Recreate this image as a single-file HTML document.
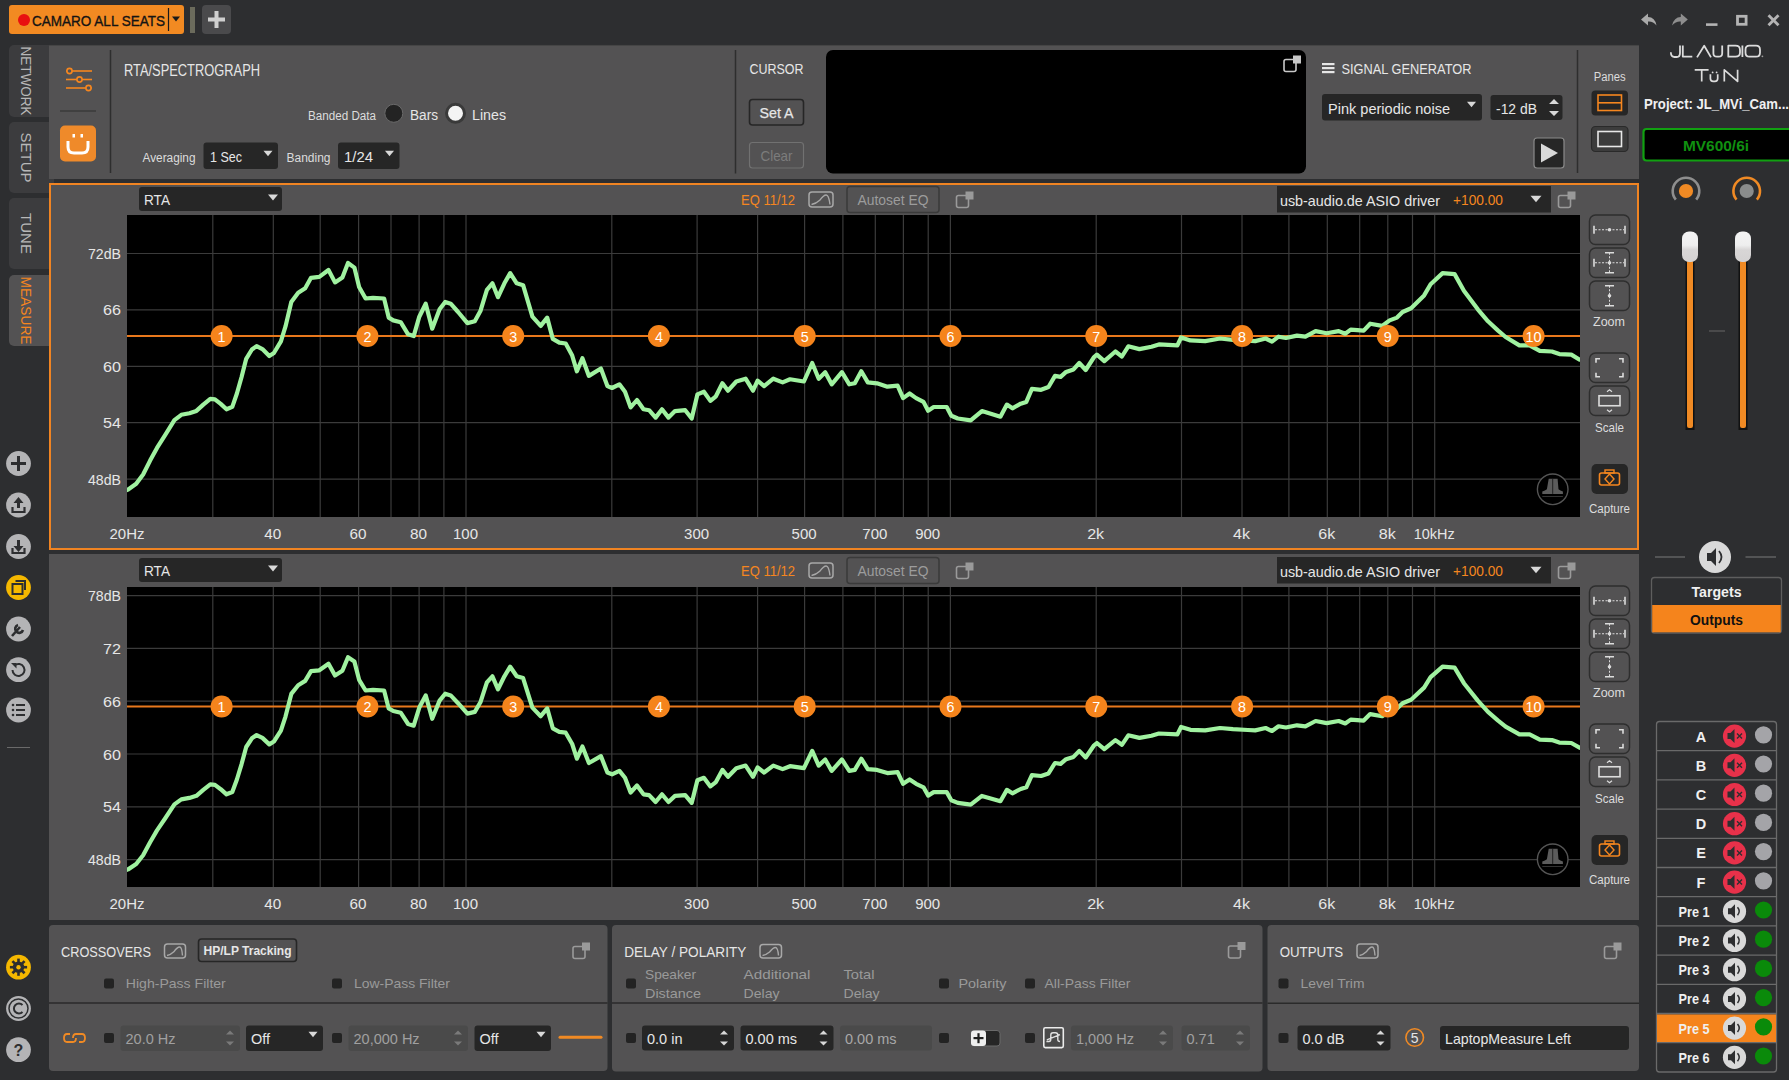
<!DOCTYPE html>
<html><head><meta charset="utf-8"><title>JL Audio TüN - RTA</title>
<style>html,body{margin:0;padding:0;background:#2d2e30;overflow:hidden}svg{display:block}text{font-family:"Liberation Sans", sans-serif}</style>
</head><body>
<svg width="1789" height="1080" viewBox="0 0 1789 1080">
<rect x="0" y="0" width="1789" height="1080" fill="#2d2e30" />
<rect x="9" y="5" width="175" height="29" fill="#f28a22" rx="3" />
<circle cx="24" cy="20" r="6" fill="#e81010"/>
<text x="32" y="25.5" font-size="15.5" fill="#141414" text-anchor="start" font-weight="normal" textLength="133" lengthAdjust="spacingAndGlyphs" stroke="#141414" stroke-width="0.35">CAMARO ALL SEATS</text>
<line x1="168.5" y1="8" x2="168.5" y2="31" stroke="#1a1a1a" stroke-width="1.2" />
<path d="M172.0 16.5 L180.0 16.5 L176 21.5 Z" fill="#1a1a1a"/>
<rect x="190" y="7" width="5" height="26" fill="#6b6b5c" />
<rect x="202" y="5" width="29" height="29" fill="#4a4a4c" rx="4" />
<rect x="208" y="17.5" width="17" height="4" fill="#cfcfcf" />
<rect x="214.5" y="11" width="4" height="17" fill="#cfcfcf" />
<path d="M1641 19.5 L1648 13.5 L1648 17 Q1655 17 1656.5 25.5 Q1653 21 1648 21.5 L1648 25.5 Z" fill="#a9a9a9"/>
<path d="M1687.8 19.5 L1680.8 13.5 L1680.8 17 Q1674 17 1672 25.5 Q1676 21 1680.8 21.5 L1680.8 25.5 Z" fill="#8e8e8e"/>
<rect x="1706" y="23.3" width="11.5" height="2.6" fill="#b4b4b4" />
<rect x="1737.5" y="16.3" width="8.6" height="8" fill="none" stroke="#b4b4b4" stroke-width="2.8" />
<line x1="1768.5" y1="15.2" x2="1778.5" y2="25.2" stroke="#b4b4b4" stroke-width="2.9" />
<line x1="1778.5" y1="15.2" x2="1768.5" y2="25.2" stroke="#b4b4b4" stroke-width="2.9" />
<rect x="9" y="45" width="45" height="72" fill="#3c3c3e" rx="5" />
<text x="0" y="0" font-size="15" fill="#b8b8b8" text-anchor="middle" font-weight="normal" textLength="69" lengthAdjust="spacingAndGlyphs" transform="translate(20.5 81.0) rotate(90)">NETWORK</text>
<rect x="9" y="122" width="45" height="71" fill="#3c3c3e" rx="5" />
<text x="0" y="0" font-size="15" fill="#b8b8b8" text-anchor="middle" font-weight="normal" transform="translate(20.5 157.5) rotate(90)">SETUP</text>
<rect x="9" y="198" width="45" height="71" fill="#3c3c3e" rx="5" />
<text x="0" y="0" font-size="15" fill="#b8b8b8" text-anchor="middle" font-weight="normal" transform="translate(20.5 233.5) rotate(90)">TUNE</text>
<rect x="9" y="275" width="45" height="71" fill="#535253" rx="5" />
<text x="0" y="0" font-size="15" fill="#f5861f" text-anchor="middle" font-weight="normal" textLength="68" lengthAdjust="spacingAndGlyphs" transform="translate(20.5 310.5) rotate(90)">MEASURE</text>
<circle cx="18.5" cy="463.5" r="12.4" fill="#b4b4b6"/>
<rect x="11" y="462" width="15" height="3" fill="#2d2e30" />
<rect x="17" y="456" width="3" height="15" fill="#2d2e30" />
<circle cx="18.5" cy="505" r="12.4" fill="#b4b4b6"/>
<path d="M18.5 497 L13.5 503 L17 503 L17 508 L20 508 L20 503 L23.5 503 Z" fill="#2d2e30"/>
<path d="M12.5 507 L12.5 512 L24.5 512 L24.5 507" fill="none" stroke="#2d2e30" stroke-width="2.2"/>
<circle cx="18.5" cy="546.5" r="12.4" fill="#b4b4b6"/>
<path d="M18.5 552 L13.5 546 L17 546 L17 540 L20 540 L20 546 L23.5 546 Z" fill="#2d2e30"/>
<path d="M12.5 548 L12.5 553 L24.5 553 L24.5 548" fill="none" stroke="#2d2e30" stroke-width="2.2"/>
<circle cx="18.5" cy="587.5" r="12.4" fill="#f5b800"/>
<rect x="12.5" y="584" width="10" height="10" fill="none" stroke="#2d2e30" stroke-width="2" />
<path d="M15.5 581 L25 581 L25 590" fill="none" stroke="#2d2e30" stroke-width="2"/>
<circle cx="18.5" cy="629" r="12.4" fill="#b4b4b6"/>
<path d="M12 636 L20 627 M18 625 A4 4 0 1 0 23 630" fill="none" stroke="#2d2e30" stroke-width="2.6"/>
<circle cx="18.5" cy="669.7" r="12.4" fill="#b4b4b6"/>
<path d="M12.5 670 A6 6 0 1 0 14.5 665.5" fill="none" stroke="#2d2e30" stroke-width="2"/>
<path d="M11 663 L16.5 663 L16.5 668.5 Z" fill="#2d2e30"/>
<circle cx="18.5" cy="710" r="12.4" fill="#b4b4b6"/>
<circle cx="13" cy="705" r="1.3" fill="#2d2e30"/>
<rect x="16" y="704" width="9" height="2" fill="#2d2e30" />
<circle cx="13" cy="710" r="1.3" fill="#2d2e30"/>
<rect x="16" y="709" width="9" height="2" fill="#2d2e30" />
<circle cx="13" cy="715" r="1.3" fill="#2d2e30"/>
<rect x="16" y="714" width="9" height="2" fill="#2d2e30" />
<line x1="7" y1="747.5" x2="30" y2="747.5" stroke="#6a6a6a" stroke-width="1" />
<circle cx="18.5" cy="967.2" r="12.4" fill="#f5b800"/>
<circle cx="18.5" cy="967.2" r="5.8" fill="#2d2e30"/>
<line x1="23.5" y1="967.2" x2="27.1" y2="967.2" stroke="#2d2e30" stroke-width="2.6" />
<line x1="22.035533905932738" y1="970.7355339059328" x2="24.58111831820431" y2="973.2811183182043" stroke="#2d2e30" stroke-width="2.6" />
<line x1="18.5" y1="972.2" x2="18.5" y2="975.8000000000001" stroke="#2d2e30" stroke-width="2.6" />
<line x1="14.964466094067262" y1="970.7355339059328" x2="12.418881681795693" y2="973.2811183182043" stroke="#2d2e30" stroke-width="2.6" />
<line x1="13.5" y1="967.2" x2="9.9" y2="967.2" stroke="#2d2e30" stroke-width="2.6" />
<line x1="14.964466094067262" y1="963.6644660940673" x2="12.418881681795689" y2="961.1188816817958" stroke="#2d2e30" stroke-width="2.6" />
<line x1="18.5" y1="962.2" x2="18.5" y2="958.6" stroke="#2d2e30" stroke-width="2.6" />
<line x1="22.035533905932738" y1="963.6644660940673" x2="24.581118318204307" y2="961.1188816817958" stroke="#2d2e30" stroke-width="2.6" />
<circle cx="18.5" cy="967.2" r="2.2" fill="#f5b800"/>
<circle cx="18.5" cy="1008.5" r="12.4" fill="#b4b4b6"/>
<circle cx="18.5" cy="1008.5" r="9.5" fill="none" stroke="#2d2e30" stroke-width="1.5"/>
<path d="M22.5 1005 A5 5 0 1 0 22.5 1012" fill="none" stroke="#2d2e30" stroke-width="2"/>
<circle cx="18.5" cy="1049.7" r="12.4" fill="#b4b4b6"/>
<text x="18.5" y="1055.5" font-size="16" fill="#2d2e30" text-anchor="middle" font-weight="bold" >?</text>
<rect x="49" y="45" width="1590" height="134" fill="#535253" />
<line x1="49" y1="45.3" x2="1639" y2="45.3" stroke="#3e3d3e" stroke-width="0.8" />
<line x1="66" y1="71" x2="92" y2="71" stroke="#f5861f" stroke-width="1.6" />
<circle cx="69.5" cy="71" r="2.6" fill="#535253" stroke="#f5861f" stroke-width="1.6"/>
<line x1="66" y1="79.5" x2="92" y2="79.5" stroke="#f5861f" stroke-width="1.6" />
<circle cx="79.5" cy="79.5" r="2.6" fill="#535253" stroke="#f5861f" stroke-width="1.6"/>
<line x1="66" y1="88" x2="92" y2="88" stroke="#f5861f" stroke-width="1.6" />
<circle cx="88.5" cy="88" r="2.6" fill="#535253" stroke="#f5861f" stroke-width="1.6"/>
<line x1="60" y1="111" x2="96" y2="111" stroke="#2e2e2e" stroke-width="1.2" />
<rect x="60" y="125.5" width="36" height="36" fill="#ef8a2a" rx="5" />
<path d="M68 141 L68 147 Q68 153 74 153 L82 153 Q88 153 88 147 L88 141" fill="none" stroke="#fff" stroke-width="3"/>
<rect x="72.5" y="134" width="2.5" height="3.5" fill="#fff" />
<rect x="80.5" y="134" width="2.5" height="3.5" fill="#fff" />
<line x1="110.5" y1="50" x2="110.5" y2="173" stroke="#2e2e2e" stroke-width="1.5" />
<text x="124" y="76" font-size="16" fill="#e6e6e6" text-anchor="start" font-weight="normal" textLength="136" lengthAdjust="spacingAndGlyphs" >RTA/SPECTROGRAPH</text>
<text x="308" y="119.5" font-size="12.5" fill="#dcdcdc" text-anchor="start" font-weight="normal" textLength="68" lengthAdjust="spacingAndGlyphs" >Banded Data</text>
<circle cx="393.8" cy="113.3" r="9" fill="#232323" stroke="#6a6a6a" stroke-width="1"/>
<text x="410" y="120" font-size="14" fill="#e6e6e6" text-anchor="start" font-weight="normal" textLength="28" lengthAdjust="spacingAndGlyphs" >Bars</text>
<circle cx="455.5" cy="113.3" r="9" fill="#f4f4f4" stroke="#3a3a3a" stroke-width="3"/>
<text x="472" y="120" font-size="14" fill="#e6e6e6" text-anchor="start" font-weight="normal" textLength="34" lengthAdjust="spacingAndGlyphs" >Lines</text>
<text x="142.5" y="161.5" font-size="12.5" fill="#dcdcdc" text-anchor="start" font-weight="normal" textLength="53" lengthAdjust="spacingAndGlyphs" >Averaging</text>
<rect x="203.5" y="142.5" width="74.5" height="26.5" fill="#262626" rx="3" />
<text x="210" y="162" font-size="14.5" fill="#e6e6e6" text-anchor="start" font-weight="normal" textLength="32" lengthAdjust="spacingAndGlyphs" >1 Sec</text>
<path d="M263.5 150.75 L272.5 150.75 L268 156.25 Z" fill="#d8d8d8"/>
<text x="286.5" y="161.5" font-size="12.5" fill="#dcdcdc" text-anchor="start" font-weight="normal" textLength="44" lengthAdjust="spacingAndGlyphs" >Banding</text>
<rect x="338" y="142.5" width="61.5" height="26.5" fill="#262626" rx="3" />
<text x="344" y="162" font-size="14.5" fill="#e6e6e6" text-anchor="start" font-weight="normal" textLength="29" lengthAdjust="spacingAndGlyphs" >1/24</text>
<path d="M385.0 150.75 L394.0 150.75 L389.5 156.25 Z" fill="#d8d8d8"/>
<line x1="735.5" y1="50" x2="735.5" y2="173.5" stroke="#2e2e2e" stroke-width="1.5" />
<text x="749.5" y="73.6" font-size="15" fill="#e6e6e6" text-anchor="start" font-weight="normal" textLength="54" lengthAdjust="spacingAndGlyphs" >CURSOR</text>
<rect x="749.5" y="99.5" width="54" height="25.5" fill="#535253" rx="3" stroke="#262626" stroke-width="1.6" />
<text x="776.5" y="117.5" font-size="14.5" fill="#e6e6e6" text-anchor="middle" font-weight="normal" textLength="34" lengthAdjust="spacingAndGlyphs" stroke="#e6e6e6" stroke-width="0.25">Set A</text>
<rect x="749.5" y="142.5" width="54" height="25.5" fill="#535253" rx="3" stroke="#717171" stroke-width="1.2" />
<text x="776.5" y="161" font-size="14.5" fill="#7c7c7c" text-anchor="middle" font-weight="normal" textLength="32" lengthAdjust="spacingAndGlyphs" >Clear</text>
<rect x="826" y="50" width="480" height="123.5" fill="#000" rx="7" />
<rect x="1284" y="59.5" width="12" height="12" rx="2" fill="none" stroke="#c8c8c8" stroke-width="1.6"/>
<rect x="1293" y="55.5" width="8" height="8" fill="#c8c8c8"/>
<rect x="1322" y="63" width="12.5" height="2.2" fill="#e6e6e6" />
<rect x="1322" y="67" width="12.5" height="2.2" fill="#e6e6e6" />
<rect x="1322" y="71" width="12.5" height="2.2" fill="#e6e6e6" />
<text x="1341.5" y="73.5" font-size="15" fill="#e6e6e6" text-anchor="start" font-weight="normal" textLength="130" lengthAdjust="spacingAndGlyphs" >SIGNAL GENERATOR</text>
<rect x="1322" y="94" width="160" height="26.5" fill="#262626" rx="3" />
<text x="1328" y="113.5" font-size="14.5" fill="#e6e6e6" text-anchor="start" font-weight="normal" textLength="122" lengthAdjust="spacingAndGlyphs" >Pink periodic noise</text>
<path d="M1467.0 101.75 L1476.0 101.75 L1471.5 107.25 Z" fill="#d8d8d8"/>
<rect x="1490.5" y="95" width="72" height="25" fill="#262626" rx="3" />
<text x="1496" y="113.5" font-size="14.5" fill="#e6e6e6" text-anchor="start" font-weight="normal" textLength="41" lengthAdjust="spacingAndGlyphs" >-12 dB</text>
<path d="M1549 104 L1554 99 L1559 104 Z M1549 111 L1554 116 L1559 111 Z" fill="#d8d8d8"/>
<rect x="1534" y="138" width="30" height="30" fill="#262626" rx="3" stroke="#8a8a8a" stroke-width="1.2" />
<path d="M1541 143.5 L1558 153 L1541 162.5 Z" fill="#d8d8d8"/>
<line x1="1577.5" y1="50" x2="1577.5" y2="173" stroke="#2e2e2e" stroke-width="1.5" />
<text x="1609.7" y="81" font-size="12.5" fill="#dcdcdc" text-anchor="middle" font-weight="normal" textLength="32" lengthAdjust="spacingAndGlyphs" >Panes</text>
<rect x="1591.5" y="90.5" width="36.5" height="25" fill="#262626" rx="4" />
<rect x="1598" y="95" width="23.5" height="15.5" fill="none" stroke="#f5861f" stroke-width="1.6" />
<line x1="1598" y1="102.8" x2="1621.5" y2="102.8" stroke="#f5861f" stroke-width="1.6" />
<rect x="1591.5" y="126.5" width="36.5" height="25" fill="#3c3c3c" rx="4" stroke="#2a2a2a" stroke-width="1.2" />
<rect x="1598" y="131.5" width="23.5" height="15" fill="none" stroke="#e8e8e8" stroke-width="1.6" />
<rect x="49" y="183" width="1590" height="367" fill="#535253" />
<rect x="50" y="184" width="1588" height="365" fill="none" stroke="#f08422" stroke-width="2" />
<rect x="139" y="187" width="143" height="24" fill="#262626" rx="3" />
<text x="144" y="205" font-size="14.5" fill="#e6e6e6" text-anchor="start" font-weight="normal" textLength="26" lengthAdjust="spacingAndGlyphs" >RTA</text>
<path d="M268.0 194.5 L278.0 194.5 L273 200.5 Z" fill="#d8d8d8"/>
<text x="741" y="205" font-size="14.5" fill="#f5861f" text-anchor="start" font-weight="normal" textLength="54" lengthAdjust="spacingAndGlyphs" >EQ 11/12</text>
<rect x="809" y="192" width="24" height="15" rx="3" fill="none" stroke="#a8a8a8" stroke-width="1.5"/>
<path d="M811.5 204.5 Q815.8 204 819.7 200.35 Q823.6 195 826.2 195 Q828.8 195 830 204.5" fill="none" stroke="#a8a8a8" stroke-width="1.4"/>
<rect x="847" y="186.5" width="92" height="26" fill="#535253" rx="3" stroke="#3a3a3a" stroke-width="1.5" />
<text x="893" y="205" font-size="14.5" fill="#9c9c9c" text-anchor="middle" font-weight="normal" textLength="71" lengthAdjust="spacingAndGlyphs" >Autoset EQ</text>
<rect x="956.5" y="195.5" width="12" height="12" rx="2" fill="none" stroke="#9a9a9a" stroke-width="1.6"/>
<rect x="965.5" y="191.5" width="8" height="8" fill="#9a9a9a"/>
<rect x="1277" y="186" width="274" height="26.5" fill="#262626" />
<text x="1280" y="205.5" font-size="14.5" fill="#e6e6e6" text-anchor="start" font-weight="normal" textLength="160" lengthAdjust="spacingAndGlyphs" >usb-audio.de ASIO driver</text>
<text x="1453" y="205" font-size="14.5" fill="#f5861f" text-anchor="start" font-weight="normal" textLength="50" lengthAdjust="spacingAndGlyphs" >+100.00</text>
<path d="M1530.5 195.75 L1541.5 195.75 L1536 202.25 Z" fill="#d8d8d8"/>
<rect x="1558.5" y="195.5" width="12" height="12" rx="2" fill="none" stroke="#9a9a9a" stroke-width="1.6"/>
<rect x="1567.5" y="191.5" width="8" height="8" fill="#9a9a9a"/>
<svg x="127" y="215" width="1453" height="302" overflow="hidden">
<rect x="0" y="0" width="1453" height="302" fill="#000"/>
<line x1="85.8" y1="0" x2="85.8" y2="302" stroke="#3b3b3b" stroke-width="1.2"/>
<line x1="146.3" y1="0" x2="146.3" y2="302" stroke="#3b3b3b" stroke-width="1.2"/>
<line x1="193.2" y1="0" x2="193.2" y2="302" stroke="#3b3b3b" stroke-width="1.2"/>
<line x1="231.6" y1="0" x2="231.6" y2="302" stroke="#3b3b3b" stroke-width="1.2"/>
<line x1="264.0" y1="0" x2="264.0" y2="302" stroke="#3b3b3b" stroke-width="1.2"/>
<line x1="292.1" y1="0" x2="292.1" y2="302" stroke="#3b3b3b" stroke-width="1.2"/>
<line x1="316.9" y1="0" x2="316.9" y2="302" stroke="#3b3b3b" stroke-width="1.2"/>
<line x1="339.0" y1="0" x2="339.0" y2="302" stroke="#3b3b3b" stroke-width="1.2"/>
<line x1="484.8" y1="0" x2="484.8" y2="302" stroke="#3b3b3b" stroke-width="1.2"/>
<line x1="570.1" y1="0" x2="570.1" y2="302" stroke="#3b3b3b" stroke-width="1.2"/>
<line x1="630.6" y1="0" x2="630.6" y2="302" stroke="#3b3b3b" stroke-width="1.2"/>
<line x1="677.6" y1="0" x2="677.6" y2="302" stroke="#3b3b3b" stroke-width="1.2"/>
<line x1="715.9" y1="0" x2="715.9" y2="302" stroke="#3b3b3b" stroke-width="1.2"/>
<line x1="748.3" y1="0" x2="748.3" y2="302" stroke="#3b3b3b" stroke-width="1.2"/>
<line x1="776.4" y1="0" x2="776.4" y2="302" stroke="#3b3b3b" stroke-width="1.2"/>
<line x1="801.2" y1="0" x2="801.2" y2="302" stroke="#3b3b3b" stroke-width="1.2"/>
<line x1="823.4" y1="0" x2="823.4" y2="302" stroke="#3b3b3b" stroke-width="1.2"/>
<line x1="969.2" y1="0" x2="969.2" y2="302" stroke="#3b3b3b" stroke-width="1.2"/>
<line x1="1054.5" y1="0" x2="1054.5" y2="302" stroke="#3b3b3b" stroke-width="1.2"/>
<line x1="1115.0" y1="0" x2="1115.0" y2="302" stroke="#3b3b3b" stroke-width="1.2"/>
<line x1="1161.9" y1="0" x2="1161.9" y2="302" stroke="#3b3b3b" stroke-width="1.2"/>
<line x1="1200.3" y1="0" x2="1200.3" y2="302" stroke="#3b3b3b" stroke-width="1.2"/>
<line x1="1232.7" y1="0" x2="1232.7" y2="302" stroke="#3b3b3b" stroke-width="1.2"/>
<line x1="1260.8" y1="0" x2="1260.8" y2="302" stroke="#3b3b3b" stroke-width="1.2"/>
<line x1="1285.5" y1="0" x2="1285.5" y2="302" stroke="#3b3b3b" stroke-width="1.2"/>
<line x1="1307.7" y1="0" x2="1307.7" y2="302" stroke="#3b3b3b" stroke-width="1.2"/>
<line x1="0" y1="38.5" x2="1453" y2="38.5" stroke="#3b3b3b" stroke-width="1.2"/>
<line x1="0" y1="94.9" x2="1453" y2="94.9" stroke="#3b3b3b" stroke-width="1.2"/>
<line x1="0" y1="151.3" x2="1453" y2="151.3" stroke="#3b3b3b" stroke-width="1.2"/>
<line x1="0" y1="207.7" x2="1453" y2="207.7" stroke="#3b3b3b" stroke-width="1.2"/>
<line x1="0" y1="264.1" x2="1453" y2="264.1" stroke="#3b3b3b" stroke-width="1.2"/>
<line x1="0" y1="121" x2="1453" y2="121" stroke="#e8781c" stroke-width="2"/>
<path d="M0.0 275.0 L1.1 274.6 L9.2 268.8 L16.1 259.5 L23.1 245.6 L30.0 232.9 L38.1 220.2 L47.4 205.1 L54.3 199.8 L62.4 198.2 L69.4 195.9 L76.3 189.6 L83.3 183.8 L87.9 184.3 L93.7 188.9 L99.5 194.3 L105.3 191.9 L109.9 178.5 L114.5 162.3 L119.2 143.8 L124.9 134.5 L129.6 131.1 L135.4 134.1 L142.3 141.0 L146.9 138.0 L153.9 126.4 L158.5 111.4 L164.3 87.1 L171.2 77.8 L178.2 73.2 L184.0 62.8 L192.3 61.9 L201.5 55.0 L208.0 67.4 L215.4 62.4 L221.0 48.0 L227.4 52.6 L232.1 72.0 L238.6 83.5 L246.0 82.8 L257.1 83.5 L261.7 102.6 L266.3 105.4 L273.7 107.2 L281.1 119.3 L286.7 121.1 L292.3 101.7 L298.7 88.7 L305.2 113.7 L312.6 94.3 L318.2 86.9 L323.7 88.7 L331.1 97.0 L340.4 108.1 L347.8 106.3 L353.4 96.1 L359.9 74.8 L365.4 68.3 L371.0 82.2 L377.4 68.3 L383.2 58.1 L389.7 68.3 L396.1 70.2 L405.4 101.7 L413.7 110.9 L420.2 102.6 L425.8 123.9 L432.3 127.6 L438.7 128.5 L445.2 140.6 L449.9 156.3 L455.4 143.3 L461.9 160.9 L473.9 153.5 L480.4 171.1 L485.0 173.0 L492.4 169.3 L498.0 176.7 L503.6 192.4 L510.0 185.0 L516.5 194.3 L522.1 195.2 L528.6 202.6 L535.0 194.3 L541.5 202.6 L548.0 196.1 L558.2 195.2 L564.7 203.5 L570.4 179.4 L576.9 176.7 L583.4 185.9 L588.9 181.3 L595.4 168.3 L601.0 175.7 L609.3 166.5 L618.6 163.7 L626.0 175.7 L630.6 165.6 L637.1 171.1 L646.3 163.7 L655.6 167.4 L663.0 164.3 L676.9 166.5 L685.2 148.0 L691.7 163.7 L698.2 157.2 L704.7 169.3 L714.9 157.2 L722.3 169.3 L727.8 168.3 L734.3 156.3 L740.8 167.4 L750.0 168.3 L760.4 171.7 L770.6 170.6 L776.1 183.1 L782.6 178.5 L789.1 183.1 L796.5 186.9 L801.1 195.7 L806.7 192.0 L819.7 192.0 L824.3 200.7 L830.8 203.5 L843.7 205.4 L854.9 196.1 L873.4 201.7 L879.9 189.6 L885.4 193.3 L893.7 188.7 L899.3 186.9 L904.9 173.9 L914.1 174.8 L921.5 172.0 L928.0 160.9 L933.6 161.9 L939.1 156.9 L946.5 154.4 L952.3 148.0 L958.7 155.0 L967.1 142.0 L969.9 139.6 L977.3 146.1 L988.4 136.5 L994.9 141.5 L1001.3 131.3 L1012.4 134.1 L1024.5 131.7 L1031.9 129.4 L1050.4 130.4 L1054.1 122.4 L1063.4 125.4 L1078.2 126.1 L1093.0 123.5 L1106.0 124.8 L1120.8 125.7 L1128.2 126.1 L1138.6 123.5 L1145.0 126.7 L1151.5 121.7 L1158.9 123.0 L1170.0 120.6 L1178.4 121.7 L1188.6 116.1 L1199.7 118.3 L1211.7 116.1 L1218.2 118.7 L1223.7 114.6 L1236.7 115.6 L1243.2 108.7 L1255.2 110.9 L1262.6 105.4 L1270.0 102.6 L1275.6 97.0 L1284.1 93.3 L1297.1 80.4 L1303.6 69.3 L1315.6 58.1 L1327.6 59.1 L1336.9 75.7 L1350.8 94.3 L1361.0 106.3 L1371.1 115.6 L1378.6 122.0 L1392.4 130.4 L1402.6 130.4 L1412.8 135.9 L1424.9 136.5 L1432.3 139.1 L1444.3 139.6 L1452.6 144.6" fill="none" stroke="#a0f2a0" stroke-width="4.2" stroke-linejoin="round" stroke-linecap="round"/>
<circle cx="94.6" cy="121" r="11" fill="#f5841c"/>
<text x="94.6" y="126.5" font-size="14.5" fill="#fff" text-anchor="middle" textLength="8" lengthAdjust="spacingAndGlyphs">1</text>
<circle cx="240.4" cy="121" r="11" fill="#f5841c"/>
<text x="240.4" y="126.5" font-size="14.5" fill="#fff" text-anchor="middle" textLength="8" lengthAdjust="spacingAndGlyphs">2</text>
<circle cx="386.2" cy="121" r="11" fill="#f5841c"/>
<text x="386.2" y="126.5" font-size="14.5" fill="#fff" text-anchor="middle" textLength="8" lengthAdjust="spacingAndGlyphs">3</text>
<circle cx="531.9" cy="121" r="11" fill="#f5841c"/>
<text x="531.9" y="126.5" font-size="14.5" fill="#fff" text-anchor="middle" textLength="8" lengthAdjust="spacingAndGlyphs">4</text>
<circle cx="677.7" cy="121" r="11" fill="#f5841c"/>
<text x="677.7" y="126.5" font-size="14.5" fill="#fff" text-anchor="middle" textLength="8" lengthAdjust="spacingAndGlyphs">5</text>
<circle cx="823.5" cy="121" r="11" fill="#f5841c"/>
<text x="823.5" y="126.5" font-size="14.5" fill="#fff" text-anchor="middle" textLength="8" lengthAdjust="spacingAndGlyphs">6</text>
<circle cx="969.3" cy="121" r="11" fill="#f5841c"/>
<text x="969.3" y="126.5" font-size="14.5" fill="#fff" text-anchor="middle" textLength="8" lengthAdjust="spacingAndGlyphs">7</text>
<circle cx="1115.1" cy="121" r="11" fill="#f5841c"/>
<text x="1115.1" y="126.5" font-size="14.5" fill="#fff" text-anchor="middle" textLength="8" lengthAdjust="spacingAndGlyphs">8</text>
<circle cx="1260.8" cy="121" r="11" fill="#f5841c"/>
<text x="1260.8" y="126.5" font-size="14.5" fill="#fff" text-anchor="middle" textLength="8" lengthAdjust="spacingAndGlyphs">9</text>
<circle cx="1406.6" cy="121" r="11" fill="#f5841c"/>
<text x="1406.6" y="126.5" font-size="14.5" fill="#fff" text-anchor="middle" textLength="16" lengthAdjust="spacingAndGlyphs">10</text>
<circle cx="1425.7" cy="274.3" r="15.3" fill="#000" stroke="#555" stroke-width="1.4"/>
<path d="M1421.7 263.8 H1430.6000000000001 L1431.5 274.3 Q1433.2 275.5 1435.9 276.5 V278.90000000000003 H1415.3 V276.5 Q1418.2 275.5 1419.9 274.3 Z" fill="#5c5c5c"/>
<line x1="1425.7" y1="263.8" x2="1425.7" y2="278.90000000000003" stroke="#111" stroke-width="0.8"/>
<line x1="1415.3" y1="281.5" x2="1435.9" y2="281.5" stroke="#333" stroke-width="1"/>
</svg>
<text x="121" y="259.0" font-size="14.5" fill="#e6e6e6" text-anchor="end" font-weight="normal" textLength="33" lengthAdjust="spacingAndGlyphs" >72dB</text>
<text x="121" y="315.4" font-size="14.5" fill="#e6e6e6" text-anchor="end" font-weight="normal" textLength="18" lengthAdjust="spacingAndGlyphs" >66</text>
<text x="121" y="371.8" font-size="14.5" fill="#e6e6e6" text-anchor="end" font-weight="normal" textLength="18" lengthAdjust="spacingAndGlyphs" >60</text>
<text x="121" y="428.20000000000005" font-size="14.5" fill="#e6e6e6" text-anchor="end" font-weight="normal" textLength="18" lengthAdjust="spacingAndGlyphs" >54</text>
<text x="121" y="484.6" font-size="14.5" fill="#e6e6e6" text-anchor="end" font-weight="normal" textLength="33" lengthAdjust="spacingAndGlyphs" >48dB</text>
<text x="127.0" y="539" font-size="14.5" fill="#e6e6e6" text-anchor="middle" font-weight="normal" textLength="35" lengthAdjust="spacingAndGlyphs" >20Hz</text>
<text x="272.7988612332549" y="539" font-size="14.5" fill="#e6e6e6" text-anchor="middle" font-weight="normal" textLength="17" lengthAdjust="spacingAndGlyphs" >40</text>
<text x="358.0857277025565" y="539" font-size="14.5" fill="#e6e6e6" text-anchor="middle" font-weight="normal" textLength="17" lengthAdjust="spacingAndGlyphs" >60</text>
<text x="418.59772246650977" y="539" font-size="14.5" fill="#e6e6e6" text-anchor="middle" font-weight="normal" textLength="17" lengthAdjust="spacingAndGlyphs" >80</text>
<text x="465.53447210007846" y="539" font-size="14.5" fill="#e6e6e6" text-anchor="middle" font-weight="normal" textLength="25" lengthAdjust="spacingAndGlyphs" >100</text>
<text x="696.6201998026349" y="539" font-size="14.5" fill="#e6e6e6" text-anchor="middle" font-weight="normal" textLength="25" lengthAdjust="spacingAndGlyphs" >300</text>
<text x="804.0689442001569" y="539" font-size="14.5" fill="#e6e6e6" text-anchor="middle" font-weight="normal" textLength="25" lengthAdjust="spacingAndGlyphs" >500</text>
<text x="874.8436228136502" y="539" font-size="14.5" fill="#e6e6e6" text-anchor="middle" font-weight="normal" textLength="25" lengthAdjust="spacingAndGlyphs" >700</text>
<text x="927.7059275051914" y="539" font-size="14.5" fill="#e6e6e6" text-anchor="middle" font-weight="normal" textLength="25" lengthAdjust="spacingAndGlyphs" >900</text>
<text x="1095.6666666666665" y="539" font-size="14.5" fill="#e6e6e6" text-anchor="middle" font-weight="normal" textLength="17" lengthAdjust="spacingAndGlyphs" >2k</text>
<text x="1241.4655278999217" y="539" font-size="14.5" fill="#e6e6e6" text-anchor="middle" font-weight="normal" textLength="17" lengthAdjust="spacingAndGlyphs" >4k</text>
<text x="1326.752394369223" y="539" font-size="14.5" fill="#e6e6e6" text-anchor="middle" font-weight="normal" textLength="17" lengthAdjust="spacingAndGlyphs" >6k</text>
<text x="1387.2643891331766" y="539" font-size="14.5" fill="#e6e6e6" text-anchor="middle" font-weight="normal" textLength="17" lengthAdjust="spacingAndGlyphs" >8k</text>
<text x="1434.201138766745" y="539" font-size="14.5" fill="#e6e6e6" text-anchor="middle" font-weight="normal" textLength="41" lengthAdjust="spacingAndGlyphs" >10kHz</text>
<rect x="1589.5" y="215" width="40" height="29.5" fill="#535253" rx="6" stroke="#2e2e2e" stroke-width="1.5" />
<rect x="1589.5" y="248" width="40" height="29.5" fill="#535253" rx="6" stroke="#2e2e2e" stroke-width="1.5" />
<rect x="1589.5" y="281" width="40" height="29.5" fill="#535253" rx="6" stroke="#2e2e2e" stroke-width="1.5" />
<path d="M1594 225.75 V233.75 M1625 225.75 V233.75" stroke="#dcdcdc" stroke-width="1.6"/>
<path d="M1595 229.75 H1624" stroke="#dcdcdc" stroke-width="1" stroke-dasharray="2 1.5"/>
<circle cx="1609.5" cy="229.75" r="1.8" fill="#dcdcdc"/>
<path d="M1594 258.75 V266.75 M1625 258.75 V266.75 M1605 252.75 H1614 M1605 272.75 H1614" stroke="#dcdcdc" stroke-width="1.6"/>
<path d="M1595 262.75 H1624 M1609.5 252.75 V272.75" stroke="#dcdcdc" stroke-width="1" stroke-dasharray="2 1.5"/>
<circle cx="1609.5" cy="262.75" r="1.8" fill="#dcdcdc"/>
<path d="M1605 285.75 H1614 M1605 305.75 H1614" stroke="#dcdcdc" stroke-width="1.6"/>
<path d="M1609.5 285.75 V305.75" stroke="#dcdcdc" stroke-width="1" stroke-dasharray="2 1.5"/>
<circle cx="1609.5" cy="295.75" r="1.8" fill="#dcdcdc"/>
<text x="1609" y="326" font-size="13" fill="#dcdcdc" text-anchor="middle" font-weight="normal" textLength="32" lengthAdjust="spacingAndGlyphs" >Zoom</text>
<rect x="1589.5" y="353" width="40" height="29.5" fill="#535253" rx="6" stroke="#2e2e2e" stroke-width="1.5" />
<path d="M1596 362.75 V358.75 H1600 M1619 358.75 H1623 V362.75 M1623 372.75 V376.75 H1619 M1600 376.75 H1596 V372.75" fill="none" stroke="#dcdcdc" stroke-width="1.6"/>
<rect x="1589.5" y="386" width="40" height="29.5" fill="#535253" rx="6" stroke="#2e2e2e" stroke-width="1.5" />
<rect x="1599" y="395.75" width="21" height="10" fill="none" stroke="#dcdcdc" stroke-width="1.6" />
<path d="M1607 391.75 L1609.5 389.75 L1612 391.75 M1607 409.75 L1609.5 411.75 L1612 409.75" fill="none" stroke="#dcdcdc" stroke-width="1.2"/>
<text x="1609.5" y="432" font-size="13" fill="#dcdcdc" text-anchor="middle" font-weight="normal" textLength="29" lengthAdjust="spacingAndGlyphs" >Scale</text>
<rect x="1591.5" y="464" width="36.5" height="30" fill="#262626" rx="5" />
<rect x="1599.5" y="473" width="20" height="12" fill="none" stroke="#f5861f" stroke-width="1.6" rx="2"/>
<rect x="1605" y="470" width="9" height="3" fill="none" stroke="#f5861f" stroke-width="1.4" />
<path d="M1609.5 474 L1614 479 L1609.5 484 L1605 479 Z" fill="none" stroke="#f5861f" stroke-width="1.4"/>
<text x="1609.5" y="513" font-size="13" fill="#dcdcdc" text-anchor="middle" font-weight="normal" textLength="41" lengthAdjust="spacingAndGlyphs" >Capture</text>
<rect x="49" y="554" width="1590" height="366" fill="#535253" />
<rect x="139" y="558" width="143" height="24" fill="#262626" rx="3" />
<text x="144" y="576" font-size="14.5" fill="#e6e6e6" text-anchor="start" font-weight="normal" textLength="26" lengthAdjust="spacingAndGlyphs" >RTA</text>
<path d="M268.0 565.5 L278.0 565.5 L273 571.5 Z" fill="#d8d8d8"/>
<text x="741" y="576" font-size="14.5" fill="#f5861f" text-anchor="start" font-weight="normal" textLength="54" lengthAdjust="spacingAndGlyphs" >EQ 11/12</text>
<rect x="809" y="563" width="24" height="15" rx="3" fill="none" stroke="#a8a8a8" stroke-width="1.5"/>
<path d="M811.5 575.5 Q815.8 575 819.7 571.35 Q823.6 566 826.2 566 Q828.8 566 830 575.5" fill="none" stroke="#a8a8a8" stroke-width="1.4"/>
<rect x="847" y="557.5" width="92" height="26" fill="#535253" rx="3" stroke="#3a3a3a" stroke-width="1.5" />
<text x="893" y="576" font-size="14.5" fill="#9c9c9c" text-anchor="middle" font-weight="normal" textLength="71" lengthAdjust="spacingAndGlyphs" >Autoset EQ</text>
<rect x="956.5" y="566.5" width="12" height="12" rx="2" fill="none" stroke="#9a9a9a" stroke-width="1.6"/>
<rect x="965.5" y="562.5" width="8" height="8" fill="#9a9a9a"/>
<rect x="1277" y="557" width="274" height="26.5" fill="#262626" />
<text x="1280" y="576.5" font-size="14.5" fill="#e6e6e6" text-anchor="start" font-weight="normal" textLength="160" lengthAdjust="spacingAndGlyphs" >usb-audio.de ASIO driver</text>
<text x="1453" y="576" font-size="14.5" fill="#f5861f" text-anchor="start" font-weight="normal" textLength="50" lengthAdjust="spacingAndGlyphs" >+100.00</text>
<path d="M1530.5 566.75 L1541.5 566.75 L1536 573.25 Z" fill="#d8d8d8"/>
<rect x="1558.5" y="566.5" width="12" height="12" rx="2" fill="none" stroke="#9a9a9a" stroke-width="1.6"/>
<rect x="1567.5" y="562.5" width="8" height="8" fill="#9a9a9a"/>
<svg x="127" y="587" width="1453" height="300" overflow="hidden">
<rect x="0" y="0" width="1453" height="300" fill="#000"/>
<line x1="85.8" y1="0" x2="85.8" y2="300" stroke="#3b3b3b" stroke-width="1.2"/>
<line x1="146.3" y1="0" x2="146.3" y2="300" stroke="#3b3b3b" stroke-width="1.2"/>
<line x1="193.2" y1="0" x2="193.2" y2="300" stroke="#3b3b3b" stroke-width="1.2"/>
<line x1="231.6" y1="0" x2="231.6" y2="300" stroke="#3b3b3b" stroke-width="1.2"/>
<line x1="264.0" y1="0" x2="264.0" y2="300" stroke="#3b3b3b" stroke-width="1.2"/>
<line x1="292.1" y1="0" x2="292.1" y2="300" stroke="#3b3b3b" stroke-width="1.2"/>
<line x1="316.9" y1="0" x2="316.9" y2="300" stroke="#3b3b3b" stroke-width="1.2"/>
<line x1="339.0" y1="0" x2="339.0" y2="300" stroke="#3b3b3b" stroke-width="1.2"/>
<line x1="484.8" y1="0" x2="484.8" y2="300" stroke="#3b3b3b" stroke-width="1.2"/>
<line x1="570.1" y1="0" x2="570.1" y2="300" stroke="#3b3b3b" stroke-width="1.2"/>
<line x1="630.6" y1="0" x2="630.6" y2="300" stroke="#3b3b3b" stroke-width="1.2"/>
<line x1="677.6" y1="0" x2="677.6" y2="300" stroke="#3b3b3b" stroke-width="1.2"/>
<line x1="715.9" y1="0" x2="715.9" y2="300" stroke="#3b3b3b" stroke-width="1.2"/>
<line x1="748.3" y1="0" x2="748.3" y2="300" stroke="#3b3b3b" stroke-width="1.2"/>
<line x1="776.4" y1="0" x2="776.4" y2="300" stroke="#3b3b3b" stroke-width="1.2"/>
<line x1="801.2" y1="0" x2="801.2" y2="300" stroke="#3b3b3b" stroke-width="1.2"/>
<line x1="823.4" y1="0" x2="823.4" y2="300" stroke="#3b3b3b" stroke-width="1.2"/>
<line x1="969.2" y1="0" x2="969.2" y2="300" stroke="#3b3b3b" stroke-width="1.2"/>
<line x1="1054.5" y1="0" x2="1054.5" y2="300" stroke="#3b3b3b" stroke-width="1.2"/>
<line x1="1115.0" y1="0" x2="1115.0" y2="300" stroke="#3b3b3b" stroke-width="1.2"/>
<line x1="1161.9" y1="0" x2="1161.9" y2="300" stroke="#3b3b3b" stroke-width="1.2"/>
<line x1="1200.3" y1="0" x2="1200.3" y2="300" stroke="#3b3b3b" stroke-width="1.2"/>
<line x1="1232.7" y1="0" x2="1232.7" y2="300" stroke="#3b3b3b" stroke-width="1.2"/>
<line x1="1260.8" y1="0" x2="1260.8" y2="300" stroke="#3b3b3b" stroke-width="1.2"/>
<line x1="1285.5" y1="0" x2="1285.5" y2="300" stroke="#3b3b3b" stroke-width="1.2"/>
<line x1="1307.7" y1="0" x2="1307.7" y2="300" stroke="#3b3b3b" stroke-width="1.2"/>
<line x1="0" y1="8.6" x2="1453" y2="8.6" stroke="#3b3b3b" stroke-width="1.2"/>
<line x1="0" y1="61.4" x2="1453" y2="61.4" stroke="#3b3b3b" stroke-width="1.2"/>
<line x1="0" y1="114.2" x2="1453" y2="114.2" stroke="#3b3b3b" stroke-width="1.2"/>
<line x1="0" y1="167.0" x2="1453" y2="167.0" stroke="#3b3b3b" stroke-width="1.2"/>
<line x1="0" y1="219.8" x2="1453" y2="219.8" stroke="#3b3b3b" stroke-width="1.2"/>
<line x1="0" y1="272.6" x2="1453" y2="272.6" stroke="#3b3b3b" stroke-width="1.2"/>
<line x1="0" y1="119.5" x2="1453" y2="119.5" stroke="#e8781c" stroke-width="2"/>
<path d="M0.0 282.8 L1.1 282.4 L9.2 277.0 L16.1 268.3 L23.1 255.3 L30.0 243.4 L38.1 231.5 L47.4 217.4 L54.3 212.4 L62.4 210.9 L69.4 208.8 L76.3 202.9 L83.3 197.4 L87.9 197.9 L93.7 202.2 L99.5 207.3 L105.3 205.0 L109.9 192.5 L114.5 177.3 L119.2 160.0 L124.9 151.3 L129.6 148.1 L135.4 150.9 L142.3 157.4 L146.9 154.5 L153.9 143.7 L158.5 129.6 L164.3 106.9 L171.2 98.2 L178.2 93.9 L184.0 84.1 L192.3 83.3 L201.5 76.8 L208.0 88.5 L215.4 83.8 L221.0 70.3 L227.4 74.6 L232.1 92.8 L238.6 103.5 L246.0 102.9 L257.1 103.5 L261.7 121.4 L266.3 124.0 L273.7 125.7 L281.1 137.0 L286.7 138.7 L292.3 120.6 L298.7 108.4 L305.2 131.8 L312.6 113.6 L318.2 106.7 L323.7 108.4 L331.1 116.2 L340.4 126.6 L347.8 124.9 L353.4 115.3 L359.9 95.4 L365.4 89.3 L371.0 102.3 L377.4 89.3 L383.2 79.7 L389.7 89.3 L396.1 91.1 L405.4 120.6 L413.7 129.2 L420.2 121.4 L425.8 141.3 L432.3 144.8 L438.7 145.7 L445.2 157.0 L449.9 171.7 L455.4 159.5 L461.9 176.0 L473.9 169.1 L480.4 185.5 L485.0 187.3 L492.4 183.9 L498.0 190.8 L503.6 205.5 L510.0 198.5 L516.5 207.3 L522.1 208.1 L528.6 215.0 L535.0 207.3 L541.5 215.0 L548.0 208.9 L558.2 208.1 L564.7 215.9 L570.4 193.3 L576.9 190.8 L583.4 199.4 L588.9 195.1 L595.4 182.9 L601.0 189.8 L609.3 181.2 L618.6 178.6 L626.0 189.8 L630.6 180.4 L637.1 185.5 L646.3 178.6 L655.6 182.1 L663.0 179.2 L676.9 181.2 L685.2 163.9 L691.7 178.6 L698.2 172.5 L704.7 183.9 L714.9 172.5 L722.3 183.9 L727.8 182.9 L734.3 171.7 L740.8 182.1 L750.0 182.9 L760.4 186.1 L770.6 185.1 L776.1 196.8 L782.6 192.5 L789.1 196.8 L796.5 200.3 L801.1 208.6 L806.7 205.1 L819.7 205.1 L824.3 213.2 L830.8 215.9 L843.7 217.6 L854.9 208.9 L873.4 214.2 L879.9 202.9 L885.4 206.3 L893.7 202.0 L899.3 200.3 L904.9 188.2 L914.1 189.0 L921.5 186.4 L928.0 176.0 L933.6 176.9 L939.1 172.2 L946.5 169.9 L952.3 163.9 L958.7 170.5 L967.1 158.3 L969.9 156.0 L977.3 162.1 L988.4 153.1 L994.9 157.8 L1001.3 148.3 L1012.4 150.9 L1024.5 148.7 L1031.9 146.5 L1050.4 147.4 L1054.1 139.9 L1063.4 142.8 L1078.2 143.4 L1093.0 141.0 L1106.0 142.2 L1120.8 143.0 L1128.2 143.4 L1138.6 141.0 L1145.0 144.0 L1151.5 139.3 L1158.9 140.5 L1170.0 138.3 L1178.4 139.3 L1188.6 134.0 L1199.7 136.1 L1211.7 134.0 L1218.2 136.5 L1223.7 132.6 L1236.7 133.6 L1243.2 127.1 L1255.2 129.2 L1262.6 124.0 L1270.0 121.4 L1275.6 116.2 L1284.1 112.7 L1297.1 100.6 L1303.6 90.2 L1315.6 79.7 L1327.6 80.7 L1336.9 96.2 L1350.8 113.6 L1361.0 124.9 L1371.1 133.6 L1378.6 139.6 L1392.4 147.4 L1402.6 147.4 L1412.8 152.6 L1424.9 153.1 L1432.3 155.6 L1444.3 156.0 L1452.6 160.7" fill="none" stroke="#a0f2a0" stroke-width="4.2" stroke-linejoin="round" stroke-linecap="round"/>
<circle cx="94.6" cy="119.5" r="11" fill="#f5841c"/>
<text x="94.6" y="125.0" font-size="14.5" fill="#fff" text-anchor="middle" textLength="8" lengthAdjust="spacingAndGlyphs">1</text>
<circle cx="240.4" cy="119.5" r="11" fill="#f5841c"/>
<text x="240.4" y="125.0" font-size="14.5" fill="#fff" text-anchor="middle" textLength="8" lengthAdjust="spacingAndGlyphs">2</text>
<circle cx="386.2" cy="119.5" r="11" fill="#f5841c"/>
<text x="386.2" y="125.0" font-size="14.5" fill="#fff" text-anchor="middle" textLength="8" lengthAdjust="spacingAndGlyphs">3</text>
<circle cx="531.9" cy="119.5" r="11" fill="#f5841c"/>
<text x="531.9" y="125.0" font-size="14.5" fill="#fff" text-anchor="middle" textLength="8" lengthAdjust="spacingAndGlyphs">4</text>
<circle cx="677.7" cy="119.5" r="11" fill="#f5841c"/>
<text x="677.7" y="125.0" font-size="14.5" fill="#fff" text-anchor="middle" textLength="8" lengthAdjust="spacingAndGlyphs">5</text>
<circle cx="823.5" cy="119.5" r="11" fill="#f5841c"/>
<text x="823.5" y="125.0" font-size="14.5" fill="#fff" text-anchor="middle" textLength="8" lengthAdjust="spacingAndGlyphs">6</text>
<circle cx="969.3" cy="119.5" r="11" fill="#f5841c"/>
<text x="969.3" y="125.0" font-size="14.5" fill="#fff" text-anchor="middle" textLength="8" lengthAdjust="spacingAndGlyphs">7</text>
<circle cx="1115.1" cy="119.5" r="11" fill="#f5841c"/>
<text x="1115.1" y="125.0" font-size="14.5" fill="#fff" text-anchor="middle" textLength="8" lengthAdjust="spacingAndGlyphs">8</text>
<circle cx="1260.8" cy="119.5" r="11" fill="#f5841c"/>
<text x="1260.8" y="125.0" font-size="14.5" fill="#fff" text-anchor="middle" textLength="8" lengthAdjust="spacingAndGlyphs">9</text>
<circle cx="1406.6" cy="119.5" r="11" fill="#f5841c"/>
<text x="1406.6" y="125.0" font-size="14.5" fill="#fff" text-anchor="middle" textLength="16" lengthAdjust="spacingAndGlyphs">10</text>
<circle cx="1425.7" cy="272.3" r="15.3" fill="#000" stroke="#555" stroke-width="1.4"/>
<path d="M1421.7 261.8 H1430.6000000000001 L1431.5 272.3 Q1433.2 273.5 1435.9 274.5 V276.90000000000003 H1415.3 V274.5 Q1418.2 273.5 1419.9 272.3 Z" fill="#5c5c5c"/>
<line x1="1425.7" y1="261.8" x2="1425.7" y2="276.90000000000003" stroke="#111" stroke-width="0.8"/>
<line x1="1415.3" y1="279.5" x2="1435.9" y2="279.5" stroke="#333" stroke-width="1"/>
</svg>
<text x="121" y="601.1" font-size="14.5" fill="#e6e6e6" text-anchor="end" font-weight="normal" textLength="33" lengthAdjust="spacingAndGlyphs" >78dB</text>
<text x="121" y="653.9" font-size="14.5" fill="#e6e6e6" text-anchor="end" font-weight="normal" textLength="18" lengthAdjust="spacingAndGlyphs" >72</text>
<text x="121" y="706.7" font-size="14.5" fill="#e6e6e6" text-anchor="end" font-weight="normal" textLength="18" lengthAdjust="spacingAndGlyphs" >66</text>
<text x="121" y="759.5" font-size="14.5" fill="#e6e6e6" text-anchor="end" font-weight="normal" textLength="18" lengthAdjust="spacingAndGlyphs" >60</text>
<text x="121" y="812.3000000000001" font-size="14.5" fill="#e6e6e6" text-anchor="end" font-weight="normal" textLength="18" lengthAdjust="spacingAndGlyphs" >54</text>
<text x="121" y="865.1" font-size="14.5" fill="#e6e6e6" text-anchor="end" font-weight="normal" textLength="33" lengthAdjust="spacingAndGlyphs" >48dB</text>
<text x="127.0" y="909" font-size="14.5" fill="#e6e6e6" text-anchor="middle" font-weight="normal" textLength="35" lengthAdjust="spacingAndGlyphs" >20Hz</text>
<text x="272.7988612332549" y="909" font-size="14.5" fill="#e6e6e6" text-anchor="middle" font-weight="normal" textLength="17" lengthAdjust="spacingAndGlyphs" >40</text>
<text x="358.0857277025565" y="909" font-size="14.5" fill="#e6e6e6" text-anchor="middle" font-weight="normal" textLength="17" lengthAdjust="spacingAndGlyphs" >60</text>
<text x="418.59772246650977" y="909" font-size="14.5" fill="#e6e6e6" text-anchor="middle" font-weight="normal" textLength="17" lengthAdjust="spacingAndGlyphs" >80</text>
<text x="465.53447210007846" y="909" font-size="14.5" fill="#e6e6e6" text-anchor="middle" font-weight="normal" textLength="25" lengthAdjust="spacingAndGlyphs" >100</text>
<text x="696.6201998026349" y="909" font-size="14.5" fill="#e6e6e6" text-anchor="middle" font-weight="normal" textLength="25" lengthAdjust="spacingAndGlyphs" >300</text>
<text x="804.0689442001569" y="909" font-size="14.5" fill="#e6e6e6" text-anchor="middle" font-weight="normal" textLength="25" lengthAdjust="spacingAndGlyphs" >500</text>
<text x="874.8436228136502" y="909" font-size="14.5" fill="#e6e6e6" text-anchor="middle" font-weight="normal" textLength="25" lengthAdjust="spacingAndGlyphs" >700</text>
<text x="927.7059275051914" y="909" font-size="14.5" fill="#e6e6e6" text-anchor="middle" font-weight="normal" textLength="25" lengthAdjust="spacingAndGlyphs" >900</text>
<text x="1095.6666666666665" y="909" font-size="14.5" fill="#e6e6e6" text-anchor="middle" font-weight="normal" textLength="17" lengthAdjust="spacingAndGlyphs" >2k</text>
<text x="1241.4655278999217" y="909" font-size="14.5" fill="#e6e6e6" text-anchor="middle" font-weight="normal" textLength="17" lengthAdjust="spacingAndGlyphs" >4k</text>
<text x="1326.752394369223" y="909" font-size="14.5" fill="#e6e6e6" text-anchor="middle" font-weight="normal" textLength="17" lengthAdjust="spacingAndGlyphs" >6k</text>
<text x="1387.2643891331766" y="909" font-size="14.5" fill="#e6e6e6" text-anchor="middle" font-weight="normal" textLength="17" lengthAdjust="spacingAndGlyphs" >8k</text>
<text x="1434.201138766745" y="909" font-size="14.5" fill="#e6e6e6" text-anchor="middle" font-weight="normal" textLength="41" lengthAdjust="spacingAndGlyphs" >10kHz</text>
<rect x="1589.5" y="586" width="40" height="29.5" fill="#535253" rx="6" stroke="#2e2e2e" stroke-width="1.5" />
<rect x="1589.5" y="619" width="40" height="29.5" fill="#535253" rx="6" stroke="#2e2e2e" stroke-width="1.5" />
<rect x="1589.5" y="652" width="40" height="29.5" fill="#535253" rx="6" stroke="#2e2e2e" stroke-width="1.5" />
<path d="M1594 596.75 V604.75 M1625 596.75 V604.75" stroke="#dcdcdc" stroke-width="1.6"/>
<path d="M1595 600.75 H1624" stroke="#dcdcdc" stroke-width="1" stroke-dasharray="2 1.5"/>
<circle cx="1609.5" cy="600.75" r="1.8" fill="#dcdcdc"/>
<path d="M1594 629.75 V637.75 M1625 629.75 V637.75 M1605 623.75 H1614 M1605 643.75 H1614" stroke="#dcdcdc" stroke-width="1.6"/>
<path d="M1595 633.75 H1624 M1609.5 623.75 V643.75" stroke="#dcdcdc" stroke-width="1" stroke-dasharray="2 1.5"/>
<circle cx="1609.5" cy="633.75" r="1.8" fill="#dcdcdc"/>
<path d="M1605 656.75 H1614 M1605 676.75 H1614" stroke="#dcdcdc" stroke-width="1.6"/>
<path d="M1609.5 656.75 V676.75" stroke="#dcdcdc" stroke-width="1" stroke-dasharray="2 1.5"/>
<circle cx="1609.5" cy="666.75" r="1.8" fill="#dcdcdc"/>
<text x="1609" y="697" font-size="13" fill="#dcdcdc" text-anchor="middle" font-weight="normal" textLength="32" lengthAdjust="spacingAndGlyphs" >Zoom</text>
<rect x="1589.5" y="724" width="40" height="29.5" fill="#535253" rx="6" stroke="#2e2e2e" stroke-width="1.5" />
<path d="M1596 733.75 V729.75 H1600 M1619 729.75 H1623 V733.75 M1623 743.75 V747.75 H1619 M1600 747.75 H1596 V743.75" fill="none" stroke="#dcdcdc" stroke-width="1.6"/>
<rect x="1589.5" y="757" width="40" height="29.5" fill="#535253" rx="6" stroke="#2e2e2e" stroke-width="1.5" />
<rect x="1599" y="766.75" width="21" height="10" fill="none" stroke="#dcdcdc" stroke-width="1.6" />
<path d="M1607 762.75 L1609.5 760.75 L1612 762.75 M1607 780.75 L1609.5 782.75 L1612 780.75" fill="none" stroke="#dcdcdc" stroke-width="1.2"/>
<text x="1609.5" y="803" font-size="13" fill="#dcdcdc" text-anchor="middle" font-weight="normal" textLength="29" lengthAdjust="spacingAndGlyphs" >Scale</text>
<rect x="1591.5" y="835" width="36.5" height="30" fill="#262626" rx="5" />
<rect x="1599.5" y="844" width="20" height="12" fill="none" stroke="#f5861f" stroke-width="1.6" rx="2"/>
<rect x="1605" y="841" width="9" height="3" fill="none" stroke="#f5861f" stroke-width="1.4" />
<path d="M1609.5 845 L1614 850 L1609.5 855 L1605 850 Z" fill="none" stroke="#f5861f" stroke-width="1.4"/>
<text x="1609.5" y="884" font-size="13" fill="#dcdcdc" text-anchor="middle" font-weight="normal" textLength="41" lengthAdjust="spacingAndGlyphs" >Capture</text>
<rect x="49" y="925" width="558.5" height="146" fill="#535253" rx="4" />
<text x="61" y="957.2" font-size="14.5" fill="#e6e6e6" text-anchor="start" font-weight="normal" textLength="90" lengthAdjust="spacingAndGlyphs" >CROSSOVERS</text>
<rect x="164.5" y="944" width="21" height="14" rx="3" fill="none" stroke="#a8a8a8" stroke-width="1.5"/>
<path d="M167.0 955.5 Q170.4 955 173.85 951.8 Q177.3 947 179.6 947 Q181.9 947 182.5 955.5" fill="none" stroke="#a8a8a8" stroke-width="1.4"/>
<rect x="198.5" y="939" width="98" height="22.5" fill="#535253" rx="3" stroke="#262626" stroke-width="1.6" />
<text x="247.5" y="954.5" font-size="13.5" fill="#e6e6e6" text-anchor="middle" font-weight="bold" textLength="88" lengthAdjust="spacingAndGlyphs" >HP/LP Tracking</text>
<rect x="573" y="946.5" width="12" height="12" rx="2" fill="none" stroke="#9a9a9a" stroke-width="1.6"/>
<rect x="582" y="942.5" width="8" height="8" fill="#9a9a9a"/>
<rect x="104" y="978.5" width="10" height="10" fill="#232323" rx="2" />
<text x="125.8" y="988" font-size="13.5" fill="#9a9a9a" text-anchor="start" font-weight="normal" textLength="100" lengthAdjust="spacingAndGlyphs" >High-Pass Filter</text>
<rect x="332" y="978.5" width="10" height="10" fill="#232323" rx="2" />
<text x="354" y="988" font-size="13.5" fill="#9a9a9a" text-anchor="start" font-weight="normal" textLength="96" lengthAdjust="spacingAndGlyphs" >Low-Pass Filter</text>
<line x1="49" y1="1003" x2="607.5" y2="1003" stroke="#2a2a2a" stroke-width="1.6" />
<path d="M70 1034 H67 Q64 1034 64 1038 Q64 1042 67 1042 H73 Q76 1042 76 1038 M79 1042 H82 Q85 1042 85 1038 Q85 1034 82 1034 H76 Q73 1034 73 1038" fill="none" stroke="#f08a24" stroke-width="1.8"/>
<rect x="104" y="1033" width="10" height="10" fill="#232323" rx="2" />
<rect x="120.5" y="1025.5" width="119.5" height="25.5" fill="#4a4a4a" rx="3" />
<text x="125.5" y="1043.5" font-size="14.5" fill="#a0a0a0" text-anchor="start" font-weight="normal" >20.0 Hz</text>
<path d="M226.0 1034.5 L230.0 1030.5 L234.0 1034.5 Z M226.0 1041.5 L230.0 1045.5 L234.0 1041.5 Z" fill="#7a7a7a"/>
<rect x="246" y="1025.5" width="77" height="25.5" fill="#262626" rx="3" />
<text x="251" y="1044.0" font-size="14.5" fill="#e6e6e6" text-anchor="start" font-weight="normal" >Off</text>
<path d="M308.5 1031.75 L317.5 1031.75 L313 1037.25 Z" fill="#d8d8d8"/>
<rect x="332" y="1033" width="10" height="10" fill="#232323" rx="2" />
<rect x="348.5" y="1025.5" width="119.5" height="25.5" fill="#4a4a4a" rx="3" />
<text x="353.5" y="1043.5" font-size="14.5" fill="#a0a0a0" text-anchor="start" font-weight="normal" >20,000 Hz</text>
<path d="M454.0 1034.5 L458.0 1030.5 L462.0 1034.5 Z M454.0 1041.5 L458.0 1045.5 L462.0 1041.5 Z" fill="#7a7a7a"/>
<rect x="474.5" y="1025.5" width="76.5" height="25.5" fill="#262626" rx="3" />
<text x="479.5" y="1044.0" font-size="14.5" fill="#e6e6e6" text-anchor="start" font-weight="normal" >Off</text>
<path d="M536.5 1031.75 L545.5 1031.75 L541.0 1037.25 Z" fill="#d8d8d8"/>
<rect x="558.5" y="1035.8" width="44" height="3" fill="#f08a24" rx="1.5" />
<rect x="612" y="925" width="650.5" height="146.5" fill="#535253" rx="4" />
<text x="624.3" y="957" font-size="14.5" fill="#e6e6e6" text-anchor="start" font-weight="normal" textLength="122" lengthAdjust="spacingAndGlyphs" >DELAY / POLARITY</text>
<rect x="760" y="944.5" width="21.5" height="13.5" rx="3" fill="none" stroke="#a8a8a8" stroke-width="1.5"/>
<path d="M762.5 955.5 Q766.05 955.0 769.575 952.025 Q773.1 947.5 775.45 947.5 Q777.8 947.5 778.5 955.5" fill="none" stroke="#a8a8a8" stroke-width="1.4"/>
<rect x="1228.5" y="946" width="12" height="12" rx="2" fill="none" stroke="#9a9a9a" stroke-width="1.6"/>
<rect x="1237.5" y="942" width="8" height="8" fill="#9a9a9a"/>
<rect x="626" y="978.5" width="10" height="10" fill="#232323" rx="2" />
<text x="645" y="978.5" font-size="13.5" fill="#9a9a9a" text-anchor="start" font-weight="normal" textLength="51" lengthAdjust="spacingAndGlyphs" >Speaker</text>
<text x="645" y="997.5" font-size="13.5" fill="#9a9a9a" text-anchor="start" font-weight="normal" textLength="56" lengthAdjust="spacingAndGlyphs" >Distance</text>
<text x="743.5" y="978.5" font-size="13.5" fill="#9a9a9a" text-anchor="start" font-weight="normal" textLength="67" lengthAdjust="spacingAndGlyphs" >Additional</text>
<text x="743.5" y="997.5" font-size="13.5" fill="#9a9a9a" text-anchor="start" font-weight="normal" textLength="36" lengthAdjust="spacingAndGlyphs" >Delay</text>
<text x="843.5" y="978.5" font-size="13.5" fill="#9a9a9a" text-anchor="start" font-weight="normal" textLength="31" lengthAdjust="spacingAndGlyphs" >Total</text>
<text x="843.5" y="997.5" font-size="13.5" fill="#9a9a9a" text-anchor="start" font-weight="normal" textLength="36" lengthAdjust="spacingAndGlyphs" >Delay</text>
<rect x="939" y="978.5" width="10" height="10" fill="#232323" rx="2" />
<text x="958.5" y="988" font-size="13.5" fill="#9a9a9a" text-anchor="start" font-weight="normal" textLength="48" lengthAdjust="spacingAndGlyphs" >Polarity</text>
<rect x="1025" y="978.5" width="10" height="10" fill="#232323" rx="2" />
<text x="1044.5" y="988" font-size="13.5" fill="#9a9a9a" text-anchor="start" font-weight="normal" textLength="86" lengthAdjust="spacingAndGlyphs" >All-Pass Filter</text>
<line x1="612" y1="1003" x2="1262.5" y2="1003" stroke="#2a2a2a" stroke-width="1.6" />
<rect x="626" y="1033" width="10" height="10" fill="#232323" rx="2" />
<rect x="642" y="1025.5" width="92" height="25" fill="#262626" rx="3" />
<text x="647" y="1043.5" font-size="14.5" fill="#e6e6e6" text-anchor="start" font-weight="normal" >0.0 in</text>
<path d="M720 1034.5 L724 1030.5 L728 1034.5 Z M720 1041.5 L724 1045.5 L728 1041.5 Z" fill="#d8d8d8"/>
<rect x="740.5" y="1025.5" width="93" height="25" fill="#262626" rx="3" />
<text x="745.5" y="1043.5" font-size="14.5" fill="#e6e6e6" text-anchor="start" font-weight="normal" >0.00 ms</text>
<path d="M819.5 1034.5 L823.5 1030.5 L827.5 1034.5 Z M819.5 1041.5 L823.5 1045.5 L827.5 1041.5 Z" fill="#d8d8d8"/>
<rect x="840" y="1025.5" width="92" height="25" fill="#4a4a4a" rx="3" />
<text x="845" y="1043.5" font-size="14.5" fill="#a8a8a8" text-anchor="start" font-weight="normal" >0.00 ms</text>
<rect x="939" y="1033" width="10" height="10" fill="#232323" rx="2" />
<rect x="971.5" y="1030.5" width="28.5" height="15.5" fill="#262626" rx="3" stroke="#6a6a6a" stroke-width="1" />
<rect x="971" y="1030.5" width="15" height="15.5" fill="#eeeeee" rx="3" />
<rect x="973.5" y="1037" width="10" height="2.2" fill="#1e1e1e" />
<rect x="977.4" y="1033.2" width="2.2" height="10" fill="#1e1e1e" />
<rect x="1025" y="1033" width="10" height="10" fill="#232323" rx="2" />
<rect x="1043.8" y="1027.8" width="19.5" height="19.8" fill="#4a4a4a" rx="1.5" stroke="#ececec" stroke-width="1.6" />
<path d="M1046.4 1041.5 H1049 Q1050.8 1041.5 1050.8 1039 V1035 Q1050.8 1032.8 1053 1032.8 H1055.5 Q1057.8 1032.8 1057.8 1035 V1039.5 Q1057.8 1041.5 1060 1041.5 M1046.8 1039.8 L1060 1034.6" fill="none" stroke="#e0e0e0" stroke-width="1.4"/>
<rect x="1071" y="1025.5" width="102" height="25" fill="#4a4a4a" rx="3" />
<text x="1076" y="1043.5" font-size="14.5" fill="#a0a0a0" text-anchor="start" font-weight="normal" >1,000 Hz</text>
<path d="M1159 1034.5 L1163 1030.5 L1167 1034.5 Z M1159 1041.5 L1163 1045.5 L1167 1041.5 Z" fill="#7a7a7a"/>
<rect x="1181.5" y="1025.5" width="68.5" height="25" fill="#4a4a4a" rx="3" />
<text x="1186.5" y="1043.5" font-size="14.5" fill="#a0a0a0" text-anchor="start" font-weight="normal" >0.71</text>
<path d="M1236.0 1034.5 L1240.0 1030.5 L1244.0 1034.5 Z M1236.0 1041.5 L1240.0 1045.5 L1244.0 1041.5 Z" fill="#7a7a7a"/>
<rect x="1267.5" y="925" width="371.5" height="146" fill="#535253" rx="4" />
<text x="1279.7" y="957" font-size="14.5" fill="#e6e6e6" text-anchor="start" font-weight="normal" textLength="63.5" lengthAdjust="spacingAndGlyphs" >OUTPUTS</text>
<rect x="1357" y="944" width="21" height="14" rx="3" fill="none" stroke="#a8a8a8" stroke-width="1.5"/>
<path d="M1359.5 955.5 Q1362.9 955 1366.35 951.8 Q1369.8 947 1372.1 947 Q1374.4 947 1375 955.5" fill="none" stroke="#a8a8a8" stroke-width="1.4"/>
<rect x="1604.5" y="946.5" width="12" height="12" rx="2" fill="none" stroke="#9a9a9a" stroke-width="1.6"/>
<rect x="1613.5" y="942.5" width="8" height="8" fill="#9a9a9a"/>
<rect x="1278.5" y="978.5" width="10" height="10" fill="#232323" rx="2" />
<text x="1300.5" y="988" font-size="13.5" fill="#9a9a9a" text-anchor="start" font-weight="normal" textLength="64" lengthAdjust="spacingAndGlyphs" >Level Trim</text>
<line x1="1267.5" y1="1003.3" x2="1639" y2="1003.3" stroke="#2a2a2a" stroke-width="1.6" />
<rect x="1278.5" y="1033" width="10" height="10" fill="#232323" rx="2" />
<rect x="1297.5" y="1025.5" width="93" height="25" fill="#262626" rx="3" />
<text x="1302.5" y="1043.5" font-size="14.5" fill="#e6e6e6" text-anchor="start" font-weight="normal" >0.0 dB</text>
<path d="M1376.5 1034.5 L1380.5 1030.5 L1384.5 1034.5 Z M1376.5 1041.5 L1380.5 1045.5 L1384.5 1041.5 Z" fill="#d8d8d8"/>
<circle cx="1414.7" cy="1037.5" r="8.8" fill="none" stroke="#f08a24" stroke-width="1.6"/>
<text x="1414.7" y="1043" font-size="14" fill="#e6e6e6" text-anchor="middle" font-weight="normal" >5</text>
<rect x="1440" y="1026" width="189" height="24" fill="#262626" rx="3" />
<text x="1445" y="1044" font-size="14.5" fill="#e6e6e6" text-anchor="start" font-weight="normal" textLength="126" lengthAdjust="spacingAndGlyphs" >LaptopMeasure Left</text>
<path d="M1670.8 52.3 Q1671 57 1674.5 57 H1676.8 Q1680 57 1680 53 V45.6 M1682.8 45.6 V56.6 H1692.3 M1697 57.4 L1704.2 45.8 L1711 57.4 M1713.4 45.6 V53.2 Q1713.4 56.7 1717 56.7 H1718.6 Q1722.2 56.7 1722.2 53.2 V45.6 M1728.3 45.7 V56.7 H1735.5 Q1740 56.7 1740 52.5 V50 Q1740 45.7 1735.5 45.7 Z M1742.4 45.6 V57 M1749.5 45.7 H1756 Q1760 45.7 1760 49.7 V52.7 Q1760 56.7 1756 56.7 H1749.5 Q1745.5 56.7 1745.5 52.7 V49.7 Q1745.5 45.7 1749.5 45.7 Z" fill="none" stroke="#dcdcdc" stroke-width="1.8" stroke-linejoin="round"/>
<circle cx="1762.4" cy="56.3" r="0.9" fill="#9a9a9a"/>
<path d="M1694.7 69.8 H1708.6 M1701.7 69.8 V81.6 M1710.4 74.3 V78.6 Q1710.4 81.4 1713.2 81.4 H1714.9 Q1717.7 81.4 1717.7 78.6 V74.3 M1724.3 81.6 V69.8 L1737.6 81.4 V69.8" fill="none" stroke="#dcdcdc" stroke-width="1.7" stroke-linejoin="round"/>
<circle cx="1712.6" cy="72.4" r="0.9" fill="#dcdcdc"/>
<circle cx="1716.6" cy="72.4" r="0.9" fill="#dcdcdc"/>
<text x="1644" y="109.2" font-size="14.5" fill="#f0f0f0" text-anchor="start" font-weight="bold" textLength="145" lengthAdjust="spacingAndGlyphs" >Project: JL_MVi_Cam...</text>
<rect x="1643.5" y="129" width="150" height="31.5" fill="#000" rx="3" stroke="#11a011" stroke-width="2.2" />
<text x="1716" y="150.5" font-size="14.5" fill="#109010" text-anchor="middle" font-weight="bold" textLength="66" lengthAdjust="spacingAndGlyphs" >MV600/6i</text>
<path d="M1675.81 199.55 A13.3 13.3 0 1 1 1696.19 199.55" fill="none" stroke="#8e8e8e" stroke-width="2.6"/>
<circle cx="1686" cy="191" r="7.1" fill="#f08a24"/>
<path d="M1736.51 199.55 A13.3 13.3 0 1 1 1756.89 199.55" fill="none" stroke="#f08a24" stroke-width="2.6"/>
<circle cx="1746.7" cy="191" r="7.1" fill="#8a8c8c"/>
<defs><linearGradient id="thumb" x1="0" y1="0" x2="0" y2="1"><stop offset="0" stop-color="#f4f4f4"/><stop offset="0.45" stop-color="#eeeeee"/><stop offset="0.6" stop-color="#d8d6d6"/><stop offset="1" stop-color="#d4d2d2"/></linearGradient></defs>
<rect x="1685.5" y="258" width="9" height="172" fill="#111" />
<rect x="1687" y="260" width="6" height="168" fill="#f08a24" rx="2" />
<rect x="1682" y="231.5" width="16" height="30.5" fill="url(#thumb)" rx="7" />
<rect x="1738.5" y="258" width="9" height="172" fill="#111" />
<rect x="1740" y="260" width="6" height="168" fill="#f08a24" rx="2" />
<rect x="1735" y="231.5" width="16" height="30.5" fill="url(#thumb)" rx="7" />
<line x1="1709" y1="331" x2="1725" y2="331" stroke="#5e5e5e" stroke-width="1.2" />
<line x1="1655" y1="557" x2="1685" y2="557" stroke="#6a6a6a" stroke-width="1.3" />
<line x1="1745.5" y1="557" x2="1776" y2="557" stroke="#6a6a6a" stroke-width="1.3" />
<circle cx="1715" cy="557" r="16" fill="#d9d9d9"/>
<path d="M1707 553 L1711 553 L1716 548 L1716 566 L1711 561 L1707 561 Z" fill="#2d2e30"/>
<path d="M1719 551 Q1724 557 1719 563" fill="none" stroke="#2d2e30" stroke-width="1.8"/>
<rect x="1651.5" y="577.5" width="130" height="55.5" fill="#2d2e30" rx="3" stroke="#5e5e5e" stroke-width="1.3" />
<rect x="1652.2" y="605" width="128.6" height="27.3" fill="#f5841c" />
<text x="1716.5" y="597" font-size="14.5" fill="#f0f0f0" text-anchor="middle" font-weight="bold" textLength="50" lengthAdjust="spacingAndGlyphs" >Targets</text>
<text x="1716.5" y="625" font-size="14.5" fill="#111" text-anchor="middle" font-weight="bold" textLength="53" lengthAdjust="spacingAndGlyphs" >Outputs</text>
<rect x="1656.5" y="721.5" width="120" height="350.5" fill="#2d2e30" rx="3" stroke="#6a6a6a" stroke-width="1.3" />
<text x="1701" y="741.6" font-size="14.5" fill="#f0f0f0" text-anchor="middle" font-weight="bold" >A</text>
<circle cx="1734.5" cy="736.1" r="11.6" fill="#e8314a"/>
<path d="M1727.5 733.1 L1730.5 733.1 L1734.5 729.1 L1734.5 743.1 L1730.5 739.1 L1727.5 739.1 Z" fill="#2d2e30"/>
<path d="M1737 733.6 L1742 738.6 M1742 733.6 L1737 738.6" stroke="#2d2e30" stroke-width="1.4"/>
<circle cx="1763.5" cy="734.8000000000001" r="8.6" fill="#a4a4a8"/>
<line x1="1656.5" y1="750.7" x2="1776.5" y2="750.7" stroke="#6a6a6a" stroke-width="1.3" />
<text x="1701" y="770.8000000000001" font-size="14.5" fill="#f0f0f0" text-anchor="middle" font-weight="bold" >B</text>
<circle cx="1734.5" cy="765.3000000000001" r="11.6" fill="#e8314a"/>
<path d="M1727.5 762.3000000000001 L1730.5 762.3000000000001 L1734.5 758.3000000000001 L1734.5 772.3000000000001 L1730.5 768.3000000000001 L1727.5 768.3000000000001 Z" fill="#2d2e30"/>
<path d="M1737 762.8000000000001 L1742 767.8000000000001 M1742 762.8000000000001 L1737 767.8000000000001" stroke="#2d2e30" stroke-width="1.4"/>
<circle cx="1763.5" cy="764.0000000000001" r="8.6" fill="#a4a4a8"/>
<line x1="1656.5" y1="779.9" x2="1776.5" y2="779.9" stroke="#6a6a6a" stroke-width="1.3" />
<text x="1701" y="800.0" font-size="14.5" fill="#f0f0f0" text-anchor="middle" font-weight="bold" >C</text>
<circle cx="1734.5" cy="794.5" r="11.6" fill="#e8314a"/>
<path d="M1727.5 791.5 L1730.5 791.5 L1734.5 787.5 L1734.5 801.5 L1730.5 797.5 L1727.5 797.5 Z" fill="#2d2e30"/>
<path d="M1737 792.0 L1742 797.0 M1742 792.0 L1737 797.0" stroke="#2d2e30" stroke-width="1.4"/>
<circle cx="1763.5" cy="793.2" r="8.6" fill="#a4a4a8"/>
<line x1="1656.5" y1="809.1" x2="1776.5" y2="809.1" stroke="#6a6a6a" stroke-width="1.3" />
<text x="1701" y="829.2" font-size="14.5" fill="#f0f0f0" text-anchor="middle" font-weight="bold" >D</text>
<circle cx="1734.5" cy="823.7" r="11.6" fill="#e8314a"/>
<path d="M1727.5 820.7 L1730.5 820.7 L1734.5 816.7 L1734.5 830.7 L1730.5 826.7 L1727.5 826.7 Z" fill="#2d2e30"/>
<path d="M1737 821.2 L1742 826.2 M1742 821.2 L1737 826.2" stroke="#2d2e30" stroke-width="1.4"/>
<circle cx="1763.5" cy="822.4000000000001" r="8.6" fill="#a4a4a8"/>
<line x1="1656.5" y1="838.3" x2="1776.5" y2="838.3" stroke="#6a6a6a" stroke-width="1.3" />
<text x="1701" y="858.4" font-size="14.5" fill="#f0f0f0" text-anchor="middle" font-weight="bold" >E</text>
<circle cx="1734.5" cy="852.9" r="11.6" fill="#e8314a"/>
<path d="M1727.5 849.9 L1730.5 849.9 L1734.5 845.9 L1734.5 859.9 L1730.5 855.9 L1727.5 855.9 Z" fill="#2d2e30"/>
<path d="M1737 850.4 L1742 855.4 M1742 850.4 L1737 855.4" stroke="#2d2e30" stroke-width="1.4"/>
<circle cx="1763.5" cy="851.6" r="8.6" fill="#a4a4a8"/>
<line x1="1656.5" y1="867.5" x2="1776.5" y2="867.5" stroke="#6a6a6a" stroke-width="1.3" />
<text x="1701" y="887.6" font-size="14.5" fill="#f0f0f0" text-anchor="middle" font-weight="bold" >F</text>
<circle cx="1734.5" cy="882.1" r="11.6" fill="#e8314a"/>
<path d="M1727.5 879.1 L1730.5 879.1 L1734.5 875.1 L1734.5 889.1 L1730.5 885.1 L1727.5 885.1 Z" fill="#2d2e30"/>
<path d="M1737 879.6 L1742 884.6 M1742 879.6 L1737 884.6" stroke="#2d2e30" stroke-width="1.4"/>
<circle cx="1763.5" cy="880.8000000000001" r="8.6" fill="#a4a4a8"/>
<line x1="1656.5" y1="896.7" x2="1776.5" y2="896.7" stroke="#6a6a6a" stroke-width="1.3" />
<text x="1709.5" y="916.8000000000001" font-size="14.5" fill="#f0f0f0" text-anchor="end" font-weight="bold" textLength="31" lengthAdjust="spacingAndGlyphs" >Pre 1</text>
<circle cx="1734.5" cy="911.3000000000001" r="11.6" fill="#d9d9d9"/>
<path d="M1728 908.3000000000001 L1731 908.3000000000001 L1735 904.3000000000001 L1735 918.3000000000001 L1731 914.3000000000001 L1728 914.3000000000001 Z" fill="#2d2e30"/>
<path d="M1737.5 907.3000000000001 Q1741 911.3000000000001 1737.5 915.3000000000001" fill="none" stroke="#2d2e30" stroke-width="1.5"/>
<circle cx="1763.5" cy="910.0000000000001" r="8.6" fill="#0a8a0a"/>
<line x1="1656.5" y1="925.9" x2="1776.5" y2="925.9" stroke="#6a6a6a" stroke-width="1.3" />
<text x="1709.5" y="946.0" font-size="14.5" fill="#f0f0f0" text-anchor="end" font-weight="bold" textLength="31" lengthAdjust="spacingAndGlyphs" >Pre 2</text>
<circle cx="1734.5" cy="940.5" r="11.6" fill="#d9d9d9"/>
<path d="M1728 937.5 L1731 937.5 L1735 933.5 L1735 947.5 L1731 943.5 L1728 943.5 Z" fill="#2d2e30"/>
<path d="M1737.5 936.5 Q1741 940.5 1737.5 944.5" fill="none" stroke="#2d2e30" stroke-width="1.5"/>
<circle cx="1763.5" cy="939.2" r="8.6" fill="#0a8a0a"/>
<line x1="1656.5" y1="955.1" x2="1776.5" y2="955.1" stroke="#6a6a6a" stroke-width="1.3" />
<text x="1709.5" y="975.2" font-size="14.5" fill="#f0f0f0" text-anchor="end" font-weight="bold" textLength="31" lengthAdjust="spacingAndGlyphs" >Pre 3</text>
<circle cx="1734.5" cy="969.7" r="11.6" fill="#d9d9d9"/>
<path d="M1728 966.7 L1731 966.7 L1735 962.7 L1735 976.7 L1731 972.7 L1728 972.7 Z" fill="#2d2e30"/>
<path d="M1737.5 965.7 Q1741 969.7 1737.5 973.7" fill="none" stroke="#2d2e30" stroke-width="1.5"/>
<circle cx="1763.5" cy="968.4000000000001" r="8.6" fill="#0a8a0a"/>
<line x1="1656.5" y1="984.3" x2="1776.5" y2="984.3" stroke="#6a6a6a" stroke-width="1.3" />
<text x="1709.5" y="1004.4" font-size="14.5" fill="#f0f0f0" text-anchor="end" font-weight="bold" textLength="31" lengthAdjust="spacingAndGlyphs" >Pre 4</text>
<circle cx="1734.5" cy="998.9" r="11.6" fill="#d9d9d9"/>
<path d="M1728 995.9 L1731 995.9 L1735 991.9 L1735 1005.9 L1731 1001.9 L1728 1001.9 Z" fill="#2d2e30"/>
<path d="M1737.5 994.9 Q1741 998.9 1737.5 1002.9" fill="none" stroke="#2d2e30" stroke-width="1.5"/>
<circle cx="1763.5" cy="997.6" r="8.6" fill="#0a8a0a"/>
<rect x="1657" y="1014.3" width="119" height="27.7" fill="#f5841c" />
<line x1="1656.5" y1="1013.5" x2="1776.5" y2="1013.5" stroke="#6a6a6a" stroke-width="1.3" />
<text x="1709.5" y="1033.6" font-size="14.5" fill="#f0f0f0" text-anchor="end" font-weight="bold" textLength="31" lengthAdjust="spacingAndGlyphs" >Pre 5</text>
<circle cx="1734.5" cy="1028.1" r="11.6" fill="#d9d9d9"/>
<path d="M1728 1025.1 L1731 1025.1 L1735 1021.0999999999999 L1735 1035.1 L1731 1031.1 L1728 1031.1 Z" fill="#2d2e30"/>
<path d="M1737.5 1024.1 Q1741 1028.1 1737.5 1032.1" fill="none" stroke="#2d2e30" stroke-width="1.5"/>
<circle cx="1763.5" cy="1026.8" r="8.6" fill="#0a8a0a"/>
<line x1="1656.5" y1="1042.7" x2="1776.5" y2="1042.7" stroke="#6a6a6a" stroke-width="1.3" />
<text x="1709.5" y="1062.8" font-size="14.5" fill="#f0f0f0" text-anchor="end" font-weight="bold" textLength="31" lengthAdjust="spacingAndGlyphs" >Pre 6</text>
<circle cx="1734.5" cy="1057.3" r="11.6" fill="#d9d9d9"/>
<path d="M1728 1054.3 L1731 1054.3 L1735 1050.3 L1735 1064.3 L1731 1060.3 L1728 1060.3 Z" fill="#2d2e30"/>
<path d="M1737.5 1053.3 Q1741 1057.3 1737.5 1061.3" fill="none" stroke="#2d2e30" stroke-width="1.5"/>
<circle cx="1763.5" cy="1056.0" r="8.6" fill="#0a8a0a"/>
</svg>
</body></html>
